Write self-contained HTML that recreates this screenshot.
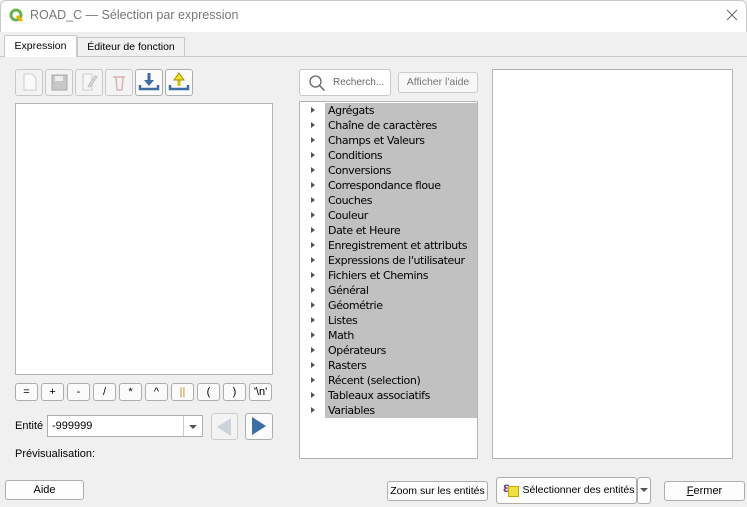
<!DOCTYPE html>
<html><head><meta charset="utf-8"><style>
*{box-sizing:border-box;margin:0;padding:0}
body{width:747px;height:507px;overflow:hidden;background:#f0f0f0;font-family:"Liberation Sans",sans-serif;font-size:11px;color:#000;position:relative}
.a{position:absolute;white-space:nowrap}
.btn{position:absolute;background:#fdfdfd;border:1px solid #adadad;border-radius:3px;text-align:center;font-size:11px;white-space:nowrap}
.box{position:absolute;background:#fff;border:1px solid #b4b4b4}
.tb{position:absolute;top:69px;width:28px;height:27px;border:1px solid #c8c8c8;border-radius:3px;background:#f3f3f3}
.op{position:absolute;top:383px;width:23px;height:18px;border:1px solid #adadad;border-radius:3px;background:#fbfbfb;text-align:center;line-height:16px;font-size:11px}
.row{height:15px;line-height:15px;position:relative;padding-left:29px;font-family:"DejaVu Sans",sans-serif;font-size:11px;letter-spacing:-0.4px;white-space:nowrap}
.row:before{content:"";position:absolute;left:12px;top:4px;border-left:4px solid #555;border-top:3.5px solid transparent;border-bottom:3.5px solid transparent}
</style></head><body>
<div class="a" style="left:0;top:0;width:747px;height:32px;background:#fff;border:1px solid #c8c8c8;border-bottom:none;border-radius:6px 6px 0 0"></div>
<svg class="a" style="left:9px;top:8px" width="15" height="15" viewBox="0 0 15 15"><circle cx="7" cy="7" r="5" fill="none" stroke="#6ab04c" stroke-width="3"/><path d="M8 8 L13 13" stroke="#f0b400" stroke-width="3"/></svg>
<div class="a" style="left:30px;top:8px;font-size:12.5px;color:#777">ROAD_C — Sélection par expression</div>
<svg class="a" style="left:726px;top:9px" width="12" height="12"><path d="M1 1L11 11M11 1L1 11" stroke="#666" stroke-width="1"/></svg>
<div class="a" style="left:0;top:56px;width:747px;height:1px;background:#c8c8c8"></div>
<div class="a" style="left:4px;top:35px;width:73px;height:22px;background:#fff;border:1px solid #c8c8c8;border-bottom:none;border-radius:2px 2px 0 0;text-align:center;line-height:21px;font-size:10.5px">Expression</div>
<div class="a" style="left:77px;top:37px;width:108px;height:19px;background:#f0f0f0;border:1px solid #c8c8c8;border-bottom:none;text-align:center;line-height:19px;font-size:10.5px">Éditeur de fonction</div>
<div class="tb" style="left:15px"></div><div class="tb" style="left:45px"></div><div class="tb" style="left:75px"></div><div class="tb" style="left:105px"></div>
<div class="tb" style="left:135px;border-color:#adadad;background:#fbfbfb"></div><div class="tb" style="left:165px;border-color:#adadad;background:#fbfbfb"></div>
<svg class="a" style="left:22px;top:73px" width="16" height="18"><path d="M2 1h8l4 4v12H2z" fill="#fafafa" stroke="#ccc"/></svg>
<svg class="a" style="left:51px;top:74px" width="17" height="17"><rect x="1" y="1" width="15" height="15" fill="#c8c8c8" stroke="#aaa"/><rect x="4" y="2" width="8" height="5" fill="#eee"/></svg>
<svg class="a" style="left:81px;top:73px" width="17" height="18"><path d="M2 1h9v16H2z" fill="#f5f5f5" stroke="#ccc"/><path d="M7 13l7-10 2 1-7 10z" fill="#ddd" stroke="#bbb"/></svg>
<svg class="a" style="left:111px;top:73px" width="16" height="18"><path d="M2 4h12M5 4l1 13h5l1-13" fill="none" stroke="#d9b3b3" stroke-width="1.5"/></svg>
<svg class="a" style="left:138px;top:72px" width="22" height="20"><path d="M11 1v10" stroke="#3a6ea5" stroke-width="3"/><path d="M6 8l5 6 5-6z" fill="#3a6ea5"/><path d="M2 13v4h18v-4" fill="none" stroke="#3a6ea5" stroke-width="2.5"/></svg>
<svg class="a" style="left:168px;top:72px" width="22" height="20"><path d="M11 14V6" stroke="#d8c000" stroke-width="3"/><path d="M6 8l5-7 5 7z" fill="#f0e020" stroke="#a09000"/><path d="M2 13v4h18v-4" fill="none" stroke="#3a6ea5" stroke-width="2.5"/></svg>
<div class="box" style="left:15px;top:103px;width:258px;height:272px"></div>
<div class="op" style="left:15px">=</div><div class="op" style="left:41px">+</div><div class="op" style="left:67px">-</div><div class="op" style="left:93px">/</div><div class="op" style="left:119px">*</div><div class="op" style="left:145px">^</div><div class="op" style="left:171px;color:#c98a1a">||</div><div class="op" style="left:197px">(</div><div class="op" style="left:223px">)</div><div class="op" style="left:249px">'\n'</div>
<div class="a" style="left:15px;top:420px">Entité</div>
<div class="box" style="left:47px;top:415px;width:156px;height:22px;border-color:#adadad;padding:4px 4px;font-size:11px">-999999</div>
<div class="a" style="left:183px;top:416px;width:1px;height:20px;background:#ccc"></div>
<div class="a" style="left:189px;top:425px;border-top:4px solid #555;border-left:4px solid transparent;border-right:4px solid transparent"></div>
<div class="a" style="left:211px;top:413px;width:27px;height:27px;border:1px solid #ccc;border-radius:3px;background:#f3f3f3"></div>
<div class="a" style="left:217px;top:418px;border-right:14px solid #ccd3da;border-top:9px solid transparent;border-bottom:9px solid transparent"></div>
<div class="a" style="left:245px;top:413px;width:28px;height:27px;border:1px solid #adadad;border-radius:3px;background:#fbfbfb"></div>
<div class="a" style="left:252px;top:417px;border-left:14px solid #3a6ea5;border-top:9.5px solid transparent;border-bottom:9.5px solid transparent"></div>
<div class="a" style="left:15px;top:448px">Prévisualisation:</div>
<div class="a" style="left:299px;top:69px;width:92px;height:27px;background:#fff;border:1px solid #c8c8c8;border-radius:3px"></div>
<svg class="a" style="left:308px;top:74px" width="18" height="18"><circle cx="7.5" cy="7.5" r="5.5" fill="none" stroke="#666" stroke-width="1.3"/><path d="M11.5 11.5l5 5" stroke="#666" stroke-width="1.5"/></svg>
<div class="a" style="left:333px;top:77px;font-size:10px;color:#666">Recherch...</div>
<div class="btn" style="left:398px;top:72px;width:80px;height:21px;line-height:19px;color:#777;font-size:10.5px;background:#f7f7f7;border-color:#ccc">Afficher l'aide</div>
<div class="box" style="left:299px;top:101px;width:179px;height:358px"></div>
<div class="a" style="left:325px;top:103px;width:152px;height:315px;background:#c1c1c1"></div>
<div class="a" style="left:299px;top:103px">
<div class="row">Agrégats</div><div class="row">Chaîne de caractères</div><div class="row">Champs et Valeurs</div><div class="row">Conditions</div><div class="row">Conversions</div><div class="row">Correspondance floue</div><div class="row">Couches</div><div class="row">Couleur</div><div class="row">Date et Heure</div><div class="row">Enregistrement et attributs</div><div class="row">Expressions de l'utilisateur</div><div class="row">Fichiers et Chemins</div><div class="row">Général</div><div class="row">Géométrie</div><div class="row">Listes</div><div class="row">Math</div><div class="row">Opérateurs</div><div class="row">Rasters</div><div class="row">Récent (selection)</div><div class="row">Tableaux associatifs</div><div class="row">Variables</div>
</div>
<div class="box" style="left:492px;top:69px;width:241px;height:390px"></div>
<div class="btn" style="left:5px;top:480px;width:79px;height:20px;line-height:18px">Aide</div>
<div class="btn" style="left:387px;top:481px;width:101px;height:20px;line-height:18px;font-size:10.5px">Zoom sur les entités</div>
<div class="btn" style="left:496px;top:477px;width:141px;height:27px;line-height:25px;padding-left:24px;font-size:10.5px">Sélectionner des entités</div>
<div class="a" style="left:503px;top:479px;font-size:14px;color:#7a3a8a;font-weight:bold">&#949;</div>
<div class="a" style="left:508px;top:486px;width:11px;height:11px;background:#f0e040;border:1px solid #c0a800"></div>
<div class="btn" style="left:637px;top:477px;width:14px;height:27px"></div>
<div class="a" style="left:640px;top:488px;border-top:4px solid #555;border-left:4px solid transparent;border-right:4px solid transparent"></div>
<div class="btn" style="left:664px;top:481px;width:81px;height:20px;line-height:18px"><u>F</u>ermer</div>
</body></html>
